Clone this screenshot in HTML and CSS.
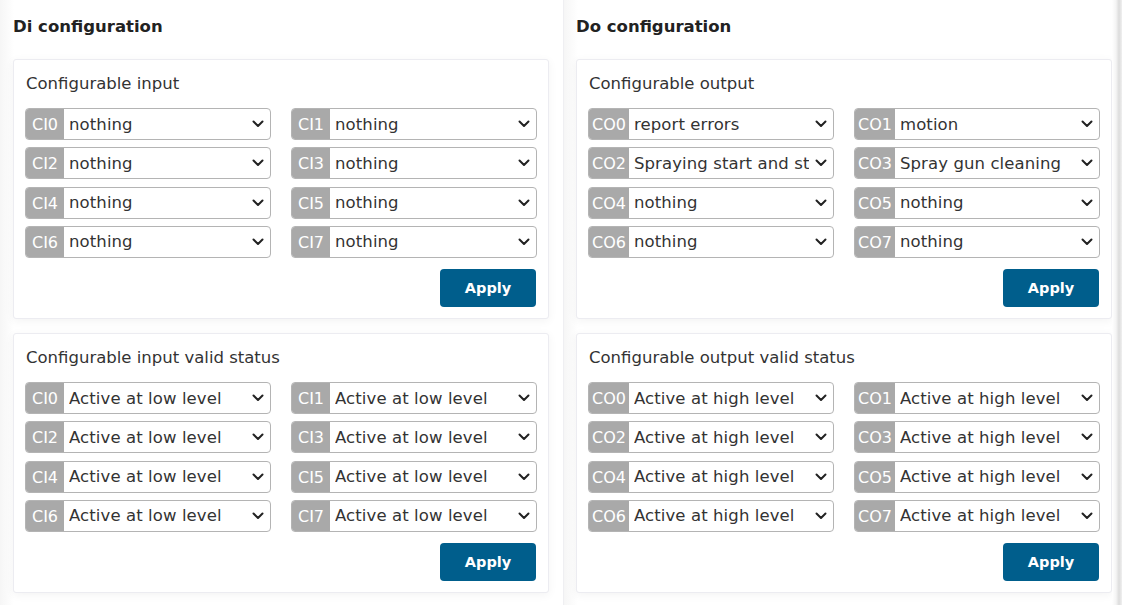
FILE: index.html
```html
<!DOCTYPE html>
<html>
<head>
<meta charset="utf-8">
<link rel="stylesheet" href="styles.css">
</head>
<body>
<div class="page">
  <section class="col col-left">
    <h2 class="col-title">Di configuration</h2>
    <div class="card">
      <div class="card-title">Configurable input</div>
      <div class="grid">
        <div class="field"><span class="tag">CI0</span><div class="sel"><span class="val">nothing</span><svg class="chev" viewBox="0 0 12 8"><path d="M1.5 1.5 L6 6 L10.5 1.5"/></svg></div></div>
        <div class="field"><span class="tag">CI1</span><div class="sel"><span class="val">nothing</span><svg class="chev" viewBox="0 0 12 8"><path d="M1.5 1.5 L6 6 L10.5 1.5"/></svg></div></div>
        <div class="field"><span class="tag">CI2</span><div class="sel"><span class="val">nothing</span><svg class="chev" viewBox="0 0 12 8"><path d="M1.5 1.5 L6 6 L10.5 1.5"/></svg></div></div>
        <div class="field"><span class="tag">CI3</span><div class="sel"><span class="val">nothing</span><svg class="chev" viewBox="0 0 12 8"><path d="M1.5 1.5 L6 6 L10.5 1.5"/></svg></div></div>
        <div class="field"><span class="tag">CI4</span><div class="sel"><span class="val">nothing</span><svg class="chev" viewBox="0 0 12 8"><path d="M1.5 1.5 L6 6 L10.5 1.5"/></svg></div></div>
        <div class="field"><span class="tag">CI5</span><div class="sel"><span class="val">nothing</span><svg class="chev" viewBox="0 0 12 8"><path d="M1.5 1.5 L6 6 L10.5 1.5"/></svg></div></div>
        <div class="field"><span class="tag">CI6</span><div class="sel"><span class="val">nothing</span><svg class="chev" viewBox="0 0 12 8"><path d="M1.5 1.5 L6 6 L10.5 1.5"/></svg></div></div>
        <div class="field"><span class="tag">CI7</span><div class="sel"><span class="val">nothing</span><svg class="chev" viewBox="0 0 12 8"><path d="M1.5 1.5 L6 6 L10.5 1.5"/></svg></div></div>
      </div>
      <div class="actions"><button class="btn">Apply</button></div>
    </div>
    <div class="card">
      <div class="card-title">Configurable input valid status</div>
      <div class="grid">
        <div class="field"><span class="tag">CI0</span><div class="sel"><span class="val">Active at low level</span><svg class="chev" viewBox="0 0 12 8"><path d="M1.5 1.5 L6 6 L10.5 1.5"/></svg></div></div>
        <div class="field"><span class="tag">CI1</span><div class="sel"><span class="val">Active at low level</span><svg class="chev" viewBox="0 0 12 8"><path d="M1.5 1.5 L6 6 L10.5 1.5"/></svg></div></div>
        <div class="field"><span class="tag">CI2</span><div class="sel"><span class="val">Active at low level</span><svg class="chev" viewBox="0 0 12 8"><path d="M1.5 1.5 L6 6 L10.5 1.5"/></svg></div></div>
        <div class="field"><span class="tag">CI3</span><div class="sel"><span class="val">Active at low level</span><svg class="chev" viewBox="0 0 12 8"><path d="M1.5 1.5 L6 6 L10.5 1.5"/></svg></div></div>
        <div class="field"><span class="tag">CI4</span><div class="sel"><span class="val">Active at low level</span><svg class="chev" viewBox="0 0 12 8"><path d="M1.5 1.5 L6 6 L10.5 1.5"/></svg></div></div>
        <div class="field"><span class="tag">CI5</span><div class="sel"><span class="val">Active at low level</span><svg class="chev" viewBox="0 0 12 8"><path d="M1.5 1.5 L6 6 L10.5 1.5"/></svg></div></div>
        <div class="field"><span class="tag">CI6</span><div class="sel"><span class="val">Active at low level</span><svg class="chev" viewBox="0 0 12 8"><path d="M1.5 1.5 L6 6 L10.5 1.5"/></svg></div></div>
        <div class="field"><span class="tag">CI7</span><div class="sel"><span class="val">Active at low level</span><svg class="chev" viewBox="0 0 12 8"><path d="M1.5 1.5 L6 6 L10.5 1.5"/></svg></div></div>
      </div>
      <div class="actions"><button class="btn">Apply</button></div>
    </div>
  </section>
  <section class="col col-right">
    <h2 class="col-title">Do configuration</h2>
    <div class="card">
      <div class="card-title">Configurable output</div>
      <div class="grid">
        <div class="field"><span class="tag">CO0</span><div class="sel"><span class="val">report errors</span><svg class="chev" viewBox="0 0 12 8"><path d="M1.5 1.5 L6 6 L10.5 1.5"/></svg></div></div>
        <div class="field"><span class="tag">CO1</span><div class="sel"><span class="val">motion</span><svg class="chev" viewBox="0 0 12 8"><path d="M1.5 1.5 L6 6 L10.5 1.5"/></svg></div></div>
        <div class="field"><span class="tag">CO2</span><div class="sel"><span class="val">Spraying start and stop</span><svg class="chev" viewBox="0 0 12 8"><path d="M1.5 1.5 L6 6 L10.5 1.5"/></svg></div></div>
        <div class="field"><span class="tag">CO3</span><div class="sel"><span class="val">Spray gun cleaning</span><svg class="chev" viewBox="0 0 12 8"><path d="M1.5 1.5 L6 6 L10.5 1.5"/></svg></div></div>
        <div class="field"><span class="tag">CO4</span><div class="sel"><span class="val">nothing</span><svg class="chev" viewBox="0 0 12 8"><path d="M1.5 1.5 L6 6 L10.5 1.5"/></svg></div></div>
        <div class="field"><span class="tag">CO5</span><div class="sel"><span class="val">nothing</span><svg class="chev" viewBox="0 0 12 8"><path d="M1.5 1.5 L6 6 L10.5 1.5"/></svg></div></div>
        <div class="field"><span class="tag">CO6</span><div class="sel"><span class="val">nothing</span><svg class="chev" viewBox="0 0 12 8"><path d="M1.5 1.5 L6 6 L10.5 1.5"/></svg></div></div>
        <div class="field"><span class="tag">CO7</span><div class="sel"><span class="val">nothing</span><svg class="chev" viewBox="0 0 12 8"><path d="M1.5 1.5 L6 6 L10.5 1.5"/></svg></div></div>
      </div>
      <div class="actions"><button class="btn">Apply</button></div>
    </div>
    <div class="card">
      <div class="card-title">Configurable output valid status</div>
      <div class="grid">
        <div class="field"><span class="tag">CO0</span><div class="sel"><span class="val">Active at high level</span><svg class="chev" viewBox="0 0 12 8"><path d="M1.5 1.5 L6 6 L10.5 1.5"/></svg></div></div>
        <div class="field"><span class="tag">CO1</span><div class="sel"><span class="val">Active at high level</span><svg class="chev" viewBox="0 0 12 8"><path d="M1.5 1.5 L6 6 L10.5 1.5"/></svg></div></div>
        <div class="field"><span class="tag">CO2</span><div class="sel"><span class="val">Active at high level</span><svg class="chev" viewBox="0 0 12 8"><path d="M1.5 1.5 L6 6 L10.5 1.5"/></svg></div></div>
        <div class="field"><span class="tag">CO3</span><div class="sel"><span class="val">Active at high level</span><svg class="chev" viewBox="0 0 12 8"><path d="M1.5 1.5 L6 6 L10.5 1.5"/></svg></div></div>
        <div class="field"><span class="tag">CO4</span><div class="sel"><span class="val">Active at high level</span><svg class="chev" viewBox="0 0 12 8"><path d="M1.5 1.5 L6 6 L10.5 1.5"/></svg></div></div>
        <div class="field"><span class="tag">CO5</span><div class="sel"><span class="val">Active at high level</span><svg class="chev" viewBox="0 0 12 8"><path d="M1.5 1.5 L6 6 L10.5 1.5"/></svg></div></div>
        <div class="field"><span class="tag">CO6</span><div class="sel"><span class="val">Active at high level</span><svg class="chev" viewBox="0 0 12 8"><path d="M1.5 1.5 L6 6 L10.5 1.5"/></svg></div></div>
        <div class="field"><span class="tag">CO7</span><div class="sel"><span class="val">Active at high level</span><svg class="chev" viewBox="0 0 12 8"><path d="M1.5 1.5 L6 6 L10.5 1.5"/></svg></div></div>
      </div>
      <div class="actions"><button class="btn">Apply</button></div>
    </div>
  </section>
  <div class="edge"></div>
</div>
</body>
</html>
```

FILE: styles.css
```css
* { box-sizing: border-box; }
html, body { margin: 0; padding: 0; }
body {
  background: #ffffff;
  font-family: "DejaVu Sans", Verdana, sans-serif;
  color: #333333;
  overflow: hidden;
}
.page {
  display: grid;
  grid-template-columns: 563px 549px 10px;
  height: 605px;
  background: linear-gradient(#f2f2f2 0, #ffffff 6px);
}
.col {
  padding: 0 13px 0 13px;
  background: linear-gradient(90deg, #f6f6f6 0, #ffffff 14px);
}
.col-right {
  border-left: 1px solid #efeff2;
  padding: 0 0 0 12px;
}
.col-title {
  margin: 0;
  padding: 16px 0 0 0;
  height: 59px;
  font-size: 16.5px;
  line-height: 21px;
  font-weight: bold;
  color: #222222;
}
.card {
  background: #ffffff;
  border: 1px solid #ececf1;
  border-radius: 3px;
  box-shadow: 0 2px 10px rgba(0, 0, 0, 0.05);
  padding: 12px 12px 12px 11px;
  height: 260px;
  margin-bottom: 14px;
  width: 536px;
}
.card-title {
  font-size: 16.5px;
  line-height: 24px;
  color: #333333;
  margin-bottom: 12px;
  padding-left: 1px;
}
.grid {
  display: grid;
  grid-template-columns: 246px 246px;
  column-gap: 20px;
  row-gap: 7.33px;
}
.field {
  display: flex;
  height: 32px;
  border: 1px solid #b4b4b4;
  border-radius: 4px;
  overflow: hidden;
  background: #ffffff;
}
.tag {
  background: #a9a9a9;
  color: #ffffff;
  font-size: 16px;
  line-height: 31px;
  padding: 0 3px;
  min-width: 38px;
  text-align: center;
}
.sel {
  flex: 1;
  display: flex;
  align-items: center;
  min-width: 0;
  padding: 0 6px 0 5px;
}
.val {
  flex: 1;
  min-width: 0;
  white-space: nowrap;
  overflow: hidden;
  font-size: 16.5px;
  line-height: 31px;
  color: #333333;
  letter-spacing: 0.1px;
}
.chev {
  width: 12px;
  height: 8px;
  flex: none;
  margin-left: 6px;
}
.chev path {
  fill: none;
  stroke: #222222;
  stroke-width: 2;
  stroke-linecap: round;
  stroke-linejoin: round;
}
.actions {
  display: flex;
  justify-content: flex-end;
  margin-top: 11px;
}
.btn {
  width: 96px;
  height: 38px;
  border: none;
  border-radius: 4px;
  background: #005e8c;
  color: #ffffff;
  font-family: "DejaVu Sans", Verdana, sans-serif;
  font-weight: bold;
  font-size: 14.5px;
  padding: 0;
}
.edge {
  background: linear-gradient(90deg, #ffffff 0, #f4f4f4 4px, #dcdcdc 7px, #f0f0f0 10px);
}
```
